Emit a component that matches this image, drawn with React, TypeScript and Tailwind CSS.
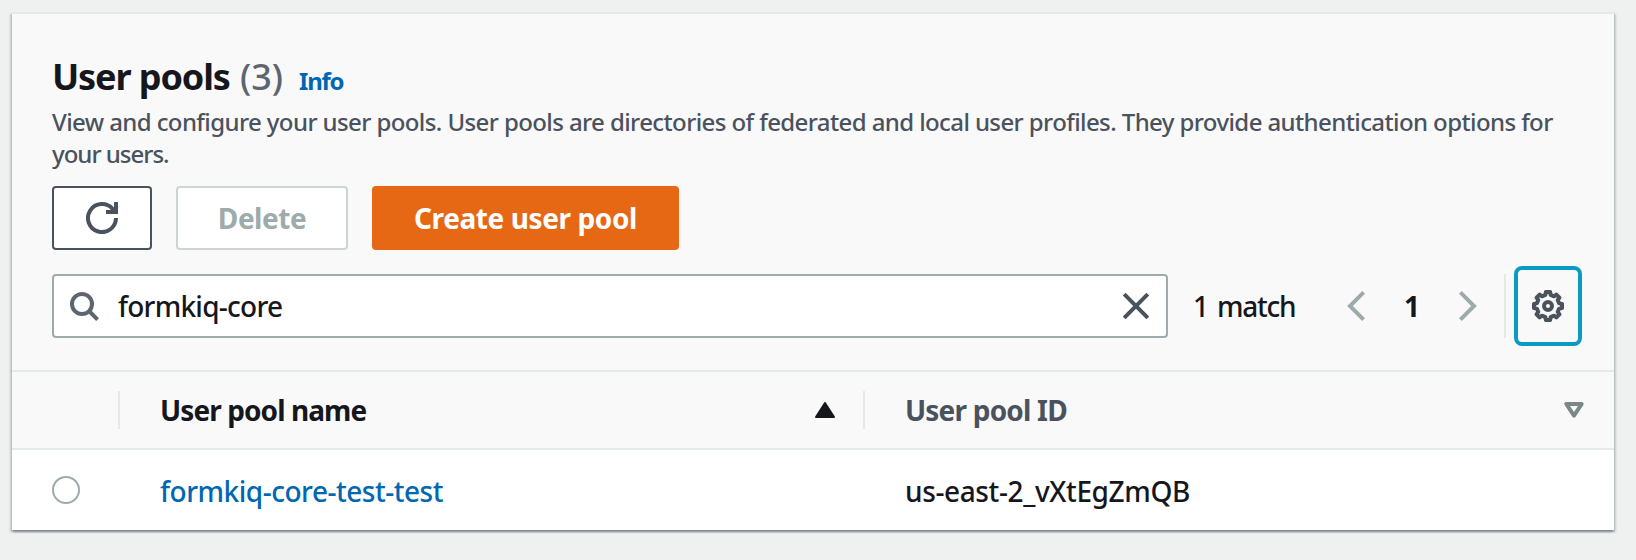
import type { ReactNode } from "react";

function RefreshIcon() {
  return (
    <svg width="32" height="32" viewBox="0 0 32 32" fill="none" stroke="#4a525d" strokeWidth="4">
      <path d="M30 16a14 14 0 1 1-3.4-9.1L29 10" />
      <path d="M30 0v10H20" />
    </svg>
  );
}

function SearchIcon() {
  return (
    <svg width="32" height="32" viewBox="0 0 32 32" fill="none" stroke="#5d666e" strokeWidth="4">
      <circle cx="14" cy="14" r="10" />
      <path d="M21 21l8.6 8.6" />
    </svg>
  );
}

function CloseIcon() {
  return (
    <svg width="32" height="32" viewBox="0 0 32 32" fill="none" stroke="#4a525d" strokeWidth="4">
      <path d="M4.2 4.2l23.6 23.6M27.8 4.2L4.2 27.8" />
    </svg>
  );
}

function Chevron({ direction }: { direction: "left" | "right" }) {
  return (
    <svg
      className="shrink-0"
      width="18"
      height="32"
      viewBox="0 0 18 32"
      fill="none"
      stroke="#9dabac"
      strokeWidth="4"
    >
      <path d={direction === "left" ? "M16.6 2.4L3 16l13.6 13.6" : "M1.4 2.4L15 16L1.4 29.6"} />
    </svg>
  );
}

const gearPoints = Array.from({ length: 8 }, (_, k) =>
  [
    [-13.5, 11.4],
    [-8.5, 14.2],
    [8.5, 14.2],
    [13.5, 11.4],
  ]
    .map(([offset, radius]) => {
      const angle = ((k * 45 + offset) * Math.PI) / 180;
      return `${(16 + radius * Math.sin(angle)).toFixed(2)},${(16 - radius * Math.cos(angle)).toFixed(2)}`;
    })
    .join(" "),
).join(" ");

function GearIcon() {
  return (
    <svg width="32" height="32" viewBox="0 0 32 32" fill="none" stroke="#4a525d" strokeWidth="4">
      <polygon points={gearPoints} strokeLinejoin="round" />
      <circle cx="16" cy="16" r="4" />
    </svg>
  );
}

function SortAscending() {
  return (
    <svg width="20" height="16" viewBox="0 0 20 16" fill="#16171d" stroke="#16171d" strokeWidth="2" strokeLinejoin="round">
      <path d="M10 1L19 15H1z" />
    </svg>
  );
}

function SortNeutral() {
  return (
    <svg width="20" height="16" viewBox="0 0 20 16" fill="none" stroke="#7b8888" strokeWidth="4" strokeLinejoin="round">
      <path d="M2.3 2h15.4L10 13.6z" />
    </svg>
  );
}

function Button({ className, children }: { className: string; children: ReactNode }) {
  return (
    <button
      className={`flex h-16 items-center justify-center rounded-[4px] border-2 text-[28px] leading-10 font-bold whitespace-nowrap ${className}`}
    >
      {children}
    </button>
  );
}

export default function App() {
  return (
    <div className="h-[560px] w-[1636px] bg-[#eff1f1] pt-3 pl-3 font-['Noto_Sans',sans-serif] text-[#16171d]">
      <section className="w-[1602px] border-t-2 border-[#e5e9e9] bg-[#f9f9f9] shadow-[0_2px_2px_0_rgba(0,28,36,0.3),2px_2px_2px_0_rgba(0,28,36,0.15),-2px_2px_2px_0_rgba(0,28,36,0.15)]">
        <header className="pt-[41px] pr-8 pb-8 pl-10">
          <div className="flex h-11 items-baseline whitespace-nowrap">
            <h2 className="w-[188px] text-[36px] leading-[44px] font-bold tracking-[-1.1px]">User pools</h2>
            <span className="w-[59px] text-[36px] leading-[44px] font-medium text-[#5d666e]">(3)</span>
            <a className="text-[24px] leading-8 font-bold tracking-[-1.2px] text-[#0067b3]">Info</a>
          </div>
          <p className="mt-[7px] text-[24px] leading-8 font-medium whitespace-nowrap text-[#4a525d]">
            <span className="block tracking-[-0.6px]">
              View and configure your user pools. User pools are directories of federated and local user profiles. They
              provide authentication options for
            </span>
            <span className="block tracking-[-1px]">your users.</span>
          </p>
          <div className="mt-4 flex gap-6">
            <Button className="w-[100px] border-[#4a525d] bg-white">
              <RefreshIcon />
            </Button>
            <Button className="w-[172px] border-[#ccd4d4] bg-white tracking-[-0.48px] text-[#9dabac]">Delete</Button>
            <Button className="w-[307px] border-[#e76814] bg-[#e76814] tracking-[-0.4px] text-white">
              Create user pool
            </Button>
          </div>
          <div className="mt-6 flex h-16 items-center">
            <div className="flex h-16 w-[1116px] shrink-0 items-center rounded-[4px] border-2 border-[#9dabac] bg-white px-[14px]">
              <SearchIcon />
              <span className="ml-[18px] flex-1 text-[28px] leading-10 font-medium tracking-[-0.75px]">
                formkiq-core
              </span>
              <CloseIcon />
            </div>
            <span className="ml-[25px] w-[154px] shrink-0 text-[28px] leading-10 font-medium tracking-[-1.2px] [word-spacing:3px]">
              1 match
            </span>
            <Chevron direction="left" />
            <span className="w-[94px] shrink-0 text-center text-[28px] leading-10 font-bold">1</span>
            <Chevron direction="right" />
            <div className="ml-[27px] h-16 w-[2px] shrink-0 bg-[#e5e9e9]" />
            <button className="-my-2 ml-2 flex h-20 w-[68px] shrink-0 items-center justify-center rounded-[8px] border-4 border-[#0a9bc5]">
              <GearIcon />
            </button>
          </div>
        </header>
        <div className="flex h-20 items-center border-y-2 border-[#e5e9e9] text-[28px] leading-[38px] font-bold">
          <div className="h-[38px] w-[108px] border-r-2 border-[#e5e9e9]" />
          <div className="flex h-[38px] w-[745px] items-center justify-between border-r-2 border-[#e5e9e9] pr-7 pl-10">
            <span className="tracking-[-0.91px]">User pool name</span>
            <SortAscending />
          </div>
          <div className="flex h-[38px] flex-1 items-center justify-between pr-[30px] pl-10 text-[#4a525d]">
            <span className="tracking-[-0.8px]">User pool ID</span>
            <SortNeutral />
          </div>
        </div>
        <div className="flex h-20 items-center bg-white pl-10 text-[28px] leading-10 font-medium">
          <span className="h-7 w-7 rounded-full border-2 border-[#9dabac]" />
          <a className="ml-20 w-[745px] pt-px tracking-[-0.48px] text-[#0067b3]">formkiq-core-test-test</a>
          <span className="pt-px tracking-[-0.38px]">us-east-2_vXtEgZmQB</span>
        </div>
      </section>
    </div>
  );
}
